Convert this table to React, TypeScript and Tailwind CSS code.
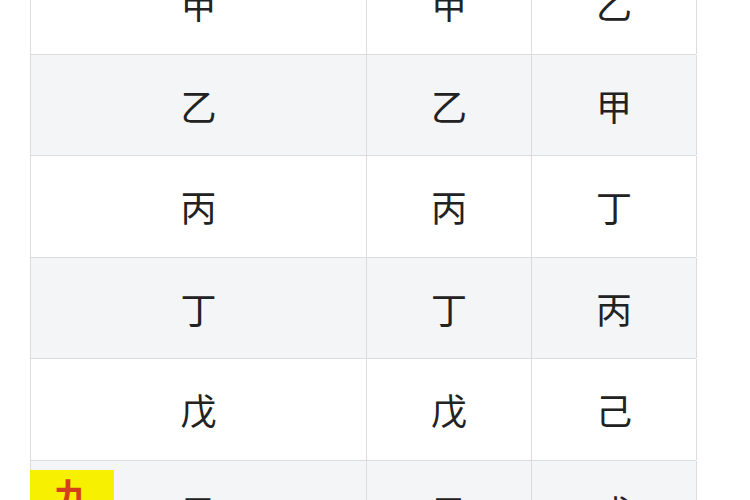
const rows = [
  ['甲', '甲', '乙'],
  ['乙', '乙', '甲'],
  ['丙', '丙', '丁'],
  ['丁', '丁', '丙'],
  ['戊', '戊', '己'],
  ['己', '己', '戊'],
];

export default function App() {
  return (
    <div
      className="relative h-[500px] w-[750px] overflow-hidden bg-white"
      style={{ fontFamily: '"Noto Sans CJK SC", "Noto Sans", sans-serif' }}
    >
      <div className="ml-[30px] mt-[-47px] w-[666px] border-l border-[#dcdcdc]">
        {rows.map((row, i) => (
          <div
            key={i}
            className={`grid h-[101.5px] grid-cols-[336px_165px_165px] border-b border-[#dcdcdc] ${
              i % 2 === 1 ? 'bg-[#f4f5f7]' : 'bg-white'
            }`}
          >
            {row.map((c, j) => (
              <div
                key={j}
                className="flex items-center justify-center border-r border-[#dcdcdc] text-[36px] leading-none text-[#222]"
              >
                {c}
              </div>
            ))}
          </div>
        ))}
      </div>
      <div className="absolute left-[30px] top-[470px] flex h-[40px] w-[84px] items-start justify-center bg-[#f7f000] pt-[6px] text-[36px] leading-none font-bold text-[#d5401c]">
        九
      </div>
    </div>
  );
}
